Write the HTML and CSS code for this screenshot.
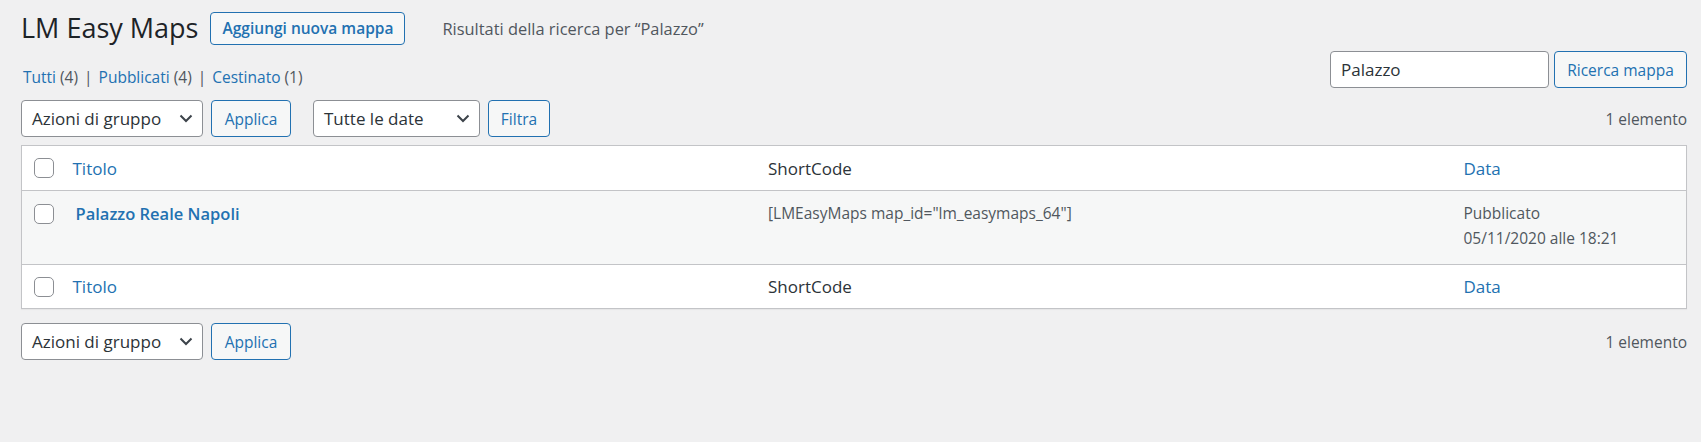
FILE: index.html
```html
<!DOCTYPE html>
<html lang="it">
<head>
<meta charset="utf-8">
<title>LM Easy Maps</title>
<link rel="stylesheet" href="styles.css">
</head>
<body>
<div class="wrap">
  <div class="heading">
    <h1 class="title">LM Easy Maps</h1>
    <a class="btn btn-add" href="#">Aggiungi nuova mappa</a>
    <span class="subtitle">Risultati della ricerca per “Palazzo”</span>
  </div>

  <div class="views-row">
    <ul class="subsubsub">
      <li><a href="#">Tutti <span class="count">(4)</span></a><span class="sep">|</span></li>
      <li><a href="#">Pubblicati <span class="count">(4)</span></a><span class="sep">|</span></li>
      <li><a href="#">Cestinato <span class="count">(1)</span></a></li>
    </ul>
    <div class="search-box">
      <input class="search-input" type="search" value="Palazzo">
      <button class="btn btn-search" type="button">Ricerca mappa</button>
    </div>
  </div>

  <div class="tablenav tablenav-top">
    <div class="actions">
      <div class="select select-bulk"><span>Azioni di gruppo</span><svg class="chev" width="14" height="9" viewBox="0 0 14 9"><path d="M1.5 1.5 L7 7 L12.5 1.5" fill="none" stroke="#3c434a" stroke-width="2"/></svg></div>
      <button class="btn btn-apply" type="button">Applica</button>
    </div>
    <div class="actions">
      <div class="select select-date"><span>Tutte le date</span><svg class="chev" width="14" height="9" viewBox="0 0 14 9"><path d="M1.5 1.5 L7 7 L12.5 1.5" fill="none" stroke="#3c434a" stroke-width="2"/></svg></div>
      <button class="btn btn-filter" type="button">Filtra</button>
    </div>
    <span class="displaying-num">1 elemento</span>
  </div>

  <table class="list-table">
    <colgroup>
      <col class="col-check">
      <col>
      <col>
      <col class="col-date">
    </colgroup>
    <thead>
      <tr>
        <td class="check-column"><input class="cb" type="checkbox"></td>
        <th class="sortable"><a href="#">Titolo</a></th>
        <th>ShortCode</th>
        <th class="sortable"><a href="#">Data</a></th>
      </tr>
    </thead>
    <tbody>
      <tr class="row-odd">
        <th class="check-column"><input class="cb" type="checkbox"></th>
        <td class="title-cell"><a class="row-title" href="#">Palazzo Reale Napoli</a></td>
        <td class="plain">[LMEasyMaps map_id="lm_easymaps_64"]</td>
        <td class="plain">Pubblicato<br>05/11/2020 alle 18:21</td>
      </tr>
    </tbody>
    <tfoot>
      <tr>
        <td class="check-column"><input class="cb" type="checkbox"></td>
        <th class="sortable"><a href="#">Titolo</a></th>
        <th>ShortCode</th>
        <th class="sortable"><a href="#">Data</a></th>
      </tr>
    </tfoot>
  </table>

  <div class="tablenav tablenav-bottom">
    <div class="actions">
      <div class="select select-bulk"><span>Azioni di gruppo</span><svg class="chev" width="14" height="9" viewBox="0 0 14 9"><path d="M1.5 1.5 L7 7 L12.5 1.5" fill="none" stroke="#3c434a" stroke-width="2"/></svg></div>
      <button class="btn btn-apply" type="button">Applica</button>
    </div>
    <span class="displaying-num">1 elemento</span>
  </div>
</div>
</body>
</html>
```

FILE: styles.css
```css
* { box-sizing: border-box; }

html, body {
  margin: 0;
  padding: 0;
  background: #f0f0f1;
}

body {
  font-family: "Open Sans", "Noto Sans", "Liberation Sans", sans-serif;
  font-size: 15.5px;
  color: #3c434a;
}

a { color: #2271b1; text-decoration: none; }

.wrap {
  padding: 0 14px 0 21px;
}

/* heading */
.heading {
  display: flex;
  align-items: center;
  height: 34px;
  margin-top: 11px;
}

.title {
  margin: 0;
  font-size: 27px;
  font-weight: 400;
  line-height: 34px;
  color: #1d2327;
}

.btn {
  display: inline-flex;
  align-items: center;
  justify-content: center;
  border: 1px solid #2271b1;
  border-radius: 4px;
  background: #f6f7f7;
  color: #2271b1;
  font-family: inherit;
  font-size: 15.5px;
  padding: 0;
  margin: 0;
}

.btn-add {
  margin-left: 12px;
  width: 195px;
  height: 33px;
  font-weight: 600;
  font-size: 15.5px;
}

.subtitle {
  margin-left: 37px;
  font-size: 16.4px;
  color: #50575e;
}

/* views + search */
.views-row {
  display: flex;
  justify-content: space-between;
  margin-top: 6px;
}

.subsubsub {
  list-style: none;
  margin: 0 0 0 2px;
  padding: 0;
  display: flex;
  align-self: flex-end;
  line-height: 22px;
  font-size: 15.5px;
  color: #50575e;
}

.subsubsub .count { color: #50575e; }

.subsubsub .sep {
  margin: 0 6px;
  color: #50575e;
}

.search-box {
  display: flex;
  gap: 5px;
}

.search-input {
  width: 219px;
  height: 37px;
  border: 1px solid #8c8f94;
  border-radius: 4px;
  background: #fff;
  padding: 0 10px;
  font-family: inherit;
  font-size: 17px;
  color: #2c3338;
  outline: none;
}

.btn-search {
  width: 133px;
  height: 37px;
}

/* tablenav */
.tablenav {
  display: flex;
  align-items: center;
  height: 37px;
}

.tablenav-top { margin-top: 12px; }
.tablenav-bottom { margin-top: 14px; }

.actions {
  display: flex;
  gap: 8px;
  margin-right: 22px;
}

.select {
  display: flex;
  align-items: center;
  justify-content: space-between;
  height: 37px;
  border: 1px solid #8c8f94;
  border-radius: 4px;
  background: #fff;
  padding: 0 9px 0 10px;
  font-size: 17px;
  color: #2c3338;
}

.select-bulk { width: 182px; }
.select-date { width: 167px; }

.chev { flex: none; }

.btn-apply { width: 80px; height: 37px; }
.btn-filter { width: 62px; height: 37px; }

.displaying-num {
  margin-left: auto;
  color: #50575e;
  font-size: 15.5px;
}

/* table */
.list-table {
  width: 100%;
  margin-top: 8px;
  border-collapse: collapse;
  table-layout: fixed;
  background: #fff;
  border: 1px solid #c3c4c7;
  box-shadow: 0 1px 1px rgba(0,0,0,.04);
}

.col-check { width: 41px; }
.col-date { width: 233px; }

.list-table th,
.list-table td {
  text-align: left;
  vertical-align: top;
  font-weight: 400;
}

.list-table thead th,
.list-table thead td,
.list-table tfoot th,
.list-table tfoot td {
  padding: 0 10px;
  vertical-align: middle;
  font-size: 17px;
  color: #2c3338;
}

.list-table thead th,
.list-table thead td { height: 45px; }

.list-table tfoot th,
.list-table tfoot td { height: 44px; }

.list-table thead tr { border-bottom: 1px solid #c3c4c7; }
.list-table tfoot tr { border-top: 1px solid #c3c4c7; }

.list-table .check-column {
  padding: 0 0 0 12px;
}

.list-table tbody .check-column {
  padding-top: 13px;
}

.cb {
  -webkit-appearance: none;
  appearance: none;
  display: block;
  width: 20px;
  height: 20px;
  margin: 0;
  border: 1px solid #8c8f94;
  border-radius: 5px;
  background: #fff;
}

.row-odd { background: #f6f7f7; }

.list-table tbody td,
.list-table tbody th {
  height: 74px;
}

.list-table tbody td {
  padding: 10px 10px 12px;
  line-height: 25px;
  font-size: 15.5px;
  color: #50575e;
}

.list-table tbody td.title-cell {
  padding-left: 13px;
}

.row-title {
  font-weight: 600;
  font-size: 16.5px;
}
```
